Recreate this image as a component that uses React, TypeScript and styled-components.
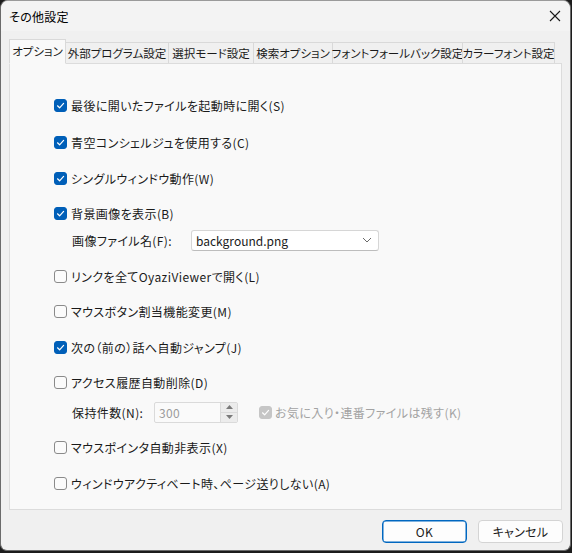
import React from "react";
import styled, { createGlobalStyle } from "styled-components";

const Global = createGlobalStyle`
  html, body { margin: 0; padding: 0; background: #1c1c1c; }
  body {
    font-family: "Noto Sans CJK JP", "Noto Sans", sans-serif;
    font-size: 12px;
    color: #1a1a1a;
    font-feature-settings: "palt" 1;
  }
  * { box-sizing: border-box; }
`;

const Window = styled.div`
  width: 571px;
  height: 551px;
  background: #f0f0f0;
  border-radius: 8px 8px 7px 7px;
  border: 1px solid #6b6b6b;
  border-top-color: #9a9a9a;
  display: flex;
  flex-direction: column;
  overflow: hidden;
`;

const TitleBar = styled.div`
  height: 30px;
  flex: none;
  display: flex;
  align-items: center;
  justify-content: space-between;
  padding-left: 8px;
  background: #f3f3f3;
  font-size: 12px;
  letter-spacing: 0.3px;
  color: #000;
`;

const CloseBtn = styled.div`
  width: 30px;
  height: 30px;
  display: flex;
  align-items: center;
  justify-content: center;
`;

const Body = styled.div`
  flex: 1;
  display: flex;
  flex-direction: column;
  padding: 7px 9px 0 8px;
`;

const Tabs = styled.div`
  display: flex;
  align-items: flex-end;
  height: 25px;
  position: relative;
  z-index: 1;
`;

const Tab = styled.div<{ $active?: boolean; $w: number }>`
  height: ${(p) => (p.$active ? 25 : 21)}px;
  padding-bottom: ${(p) => (p.$active ? 2 : 0)}px;
  display: flex;
  align-items: center;
  justify-content: center;
  width: ${(p) => p.$w}px;
  flex: none;
  background: ${(p) => (p.$active ? "#f9f9f9" : "#f0f0f0")};
  border: 1px solid #d9d9d9;
  border-bottom: ${(p) => (p.$active ? "1px solid #f9f9f9" : "none")};
  margin-left: ${(p) => (p.$active ? 0 : -1)}px;
  margin-bottom: ${(p) => (p.$active ? -1 : 0)}px;
  font-size: 11.5px;
  color: #1a1a1a;
  white-space: nowrap;
`;

const Panel = styled.div`
  height: 447px;
  width: 553px;
  background: #f9f9f9;
  border: 1px solid #dcdcdc;
  padding: 29px 0 0 44px;
  display: flex;
  flex-direction: column;
  gap: 12px;
`;

const Row = styled.label<{ $mt?: number }>`
  height: 24px;
  display: flex;
  align-items: center;
  gap: 4px;
  margin-top: ${(p) => p.$mt ?? 0}px;
  font-size: 12px;
  letter-spacing: 0.4px;
  color: #1a1a1a;
  white-space: nowrap;
`;

const SubRow = styled.div<{ $mt: number }>`
  height: 20px;
  display: flex;
  align-items: center;
  padding-left: 18px;
  margin-top: ${(p) => p.$mt}px;
  white-space: nowrap;
  letter-spacing: 0.4px;
`;

const SubLabel = styled.span<{ $w: number }>`
  width: ${(p) => p.$w}px;
  flex: none;
  font-size: 12px;
`;

const Box = styled.span<{ $checked?: boolean; $disabled?: boolean }>`
  width: 13px;
  height: 13px;
  flex: none;
  border-radius: 3px;
  display: inline-flex;
  align-items: center;
  justify-content: center;
  background: ${(p) =>
    p.$disabled ? "#c6c6c6" : p.$checked ? "#005fb8" : "#fbfbfb"};
  border: 1px solid
    ${(p) => (p.$disabled ? "#c6c6c6" : p.$checked ? "#005fb8" : "#8a8a8a")};
`;

const Combo = styled.div`
  width: 188px;
  height: 21px;
  background: #ffffff;
  border: 1px solid #d6d6d6;
  border-bottom-color: #bdbdbd;
  border-radius: 3px;
  display: flex;
  align-items: center;
  justify-content: space-between;
  padding: 0 6px 0 4px;
  font-size: 12px;
  letter-spacing: 0;
  color: #1a1a1a;
`;

const Spin = styled.div`
  width: 84px;
  height: 21px;
  display: flex;
  border: 1px solid #dadada;
  border-radius: 2px;
  background: #fafafa;
`;

const SpinText = styled.div`
  flex: 1;
  display: flex;
  align-items: center;
  padding-left: 4px;
  color: #9a9a9a;
  font-size: 12px;
`;

const SpinBtns = styled.div`
  width: 17px;
  display: flex;
  flex-direction: column;
  border-left: 1px solid #dadada;
`;

const SpinBtn = styled.div`
  flex: 1;
  display: flex;
  align-items: center;
  justify-content: center;
  background: #ececec;
  & + & { border-top: 1px solid #dadada; }
`;

const DisabledCheck = styled.div`
  display: flex;
  align-items: center;
  gap: 3px;
  margin-left: 21px;
  color: #a3a3a3;
  font-size: 12px;
`;

const Footer = styled.div`
  height: 42px;
  flex: none;
  display: flex;
  justify-content: flex-end;
  align-items: flex-start;
  gap: 11px;
  padding: 10px 7px 0 0;
`;

const Button = styled.button<{ $primary?: boolean }>`
  width: 85px;
  height: 23px;
  font-family: inherit;
  font-size: 12px;
  font-feature-settings: "palt" 1;
  letter-spacing: 0.3px;
  color: #1a1a1a;
  background: #fdfdfd;
  border: 1px solid ${(p) => (p.$primary ? "#0067c0" : "#d4d4d4")};
  box-shadow: ${(p) => (p.$primary ? "inset 0 0 0 0.5px #0067c0" : "none")};
  border-radius: 4px;
  padding: 0;
`;

const Check = ({ color = "#fff" }: { color?: string }) => (
  <svg width="9" height="9" viewBox="0 0 9 9">
    <path d="M1.5 4.8 L3.6 6.8 L7.6 2.4" fill="none" stroke={color} strokeWidth="1.2" strokeLinecap="round" strokeLinejoin="round" />
  </svg>
);

const Item = ({ text, checked, mt }: { text: string; checked?: boolean; mt?: number }) => (
  <Row $mt={mt}>
    <Box $checked={checked}>{checked && <Check />}</Box>
    <span>{text}</span>
  </Row>
);

const tabs: [string, number][] = [
  ["オプション", 57],
  ["外部プログラム設定", 104],
  ["選択モード設定", 86],
  ["検索オプション", 80],
  ["フォントフォールバック設定", 131],
  ["カラーフォント設定", 93],
];

export default function App() {
  return (
    <>
      <Global />
      <Window>
        <TitleBar>
          <span>その他設定</span>
          <CloseBtn>
            <svg width="14" height="14" viewBox="0 0 14 14">
              <path d="M2 2 L12 12 M12 2 L2 12" stroke="#1a1a1a" strokeWidth="1.1" />
            </svg>
          </CloseBtn>
        </TitleBar>
        <Body>
          <Tabs>
            {tabs.map(([t, w], i) => (
              <Tab key={t} $active={i === 0} $w={w}>
                {t}
              </Tab>
            ))}
          </Tabs>
          <Panel>
            <Item text="最後に開いたファイルを起動時に開く(S)" checked />
            <Item text="青空コンシェルジュを使用する(C)" checked mt={1} />
            <Item text="シングルウィンドウ動作(W)" checked />
            <Item text="背景画像を表示(B)" checked mt={-1} />
            <SubRow $mt={-7}>
              <SubLabel $w={119}>画像ファイル名(F):</SubLabel>
              <Combo>
                <span>background.png</span>
                <svg width="10" height="6" viewBox="0 0 10 6">
                  <path d="M1 1 L5 5 L9 1" fill="none" stroke="#6a6a6a" strokeWidth="1" />
                </svg>
              </Combo>
            </SubRow>
            <Item text="リンクを全てOyaziViewerで開く(L)" mt={2} />
            <Item text="マウスボタン割当機能変更(M)" mt={-1} />
            <Item text="次の（前の）話へ自動ジャンプ(J)" checked />
            <Item text="アクセス履歴自動削除(D)" mt={-1} />
            <SubRow $mt={-4}>
              <SubLabel $w={82}>保持件数(N):</SubLabel>
              <Spin>
                <SpinText>300</SpinText>
                <SpinBtns>
                  <SpinBtn>
                    <svg width="7" height="4" viewBox="0 0 7 4"><path d="M0 4 L3.5 0 L7 4 Z" fill="#7a7a7a" /></svg>
                  </SpinBtn>
                  <SpinBtn>
                    <svg width="7" height="4" viewBox="0 0 7 4"><path d="M0 0 L3.5 4 L7 0 Z" fill="#7a7a7a" /></svg>
                  </SpinBtn>
                </SpinBtns>
              </Spin>
              <DisabledCheck>
                <Box $disabled><Check /></Box>
                <span>お気に入り・連番ファイルは残す(K)</span>
              </DisabledCheck>
            </SubRow>
            <Item text="マウスポインタ自動非表示(X)" mt={1} />
            <Item text="ウィンドウアクティベート時、ページ送りしない(A)" />
          </Panel>
        </Body>
        <Footer>
          <Button $primary>OK</Button>
          <Button>キャンセル</Button>
        </Footer>
      </Window>
    </>
  );
}
